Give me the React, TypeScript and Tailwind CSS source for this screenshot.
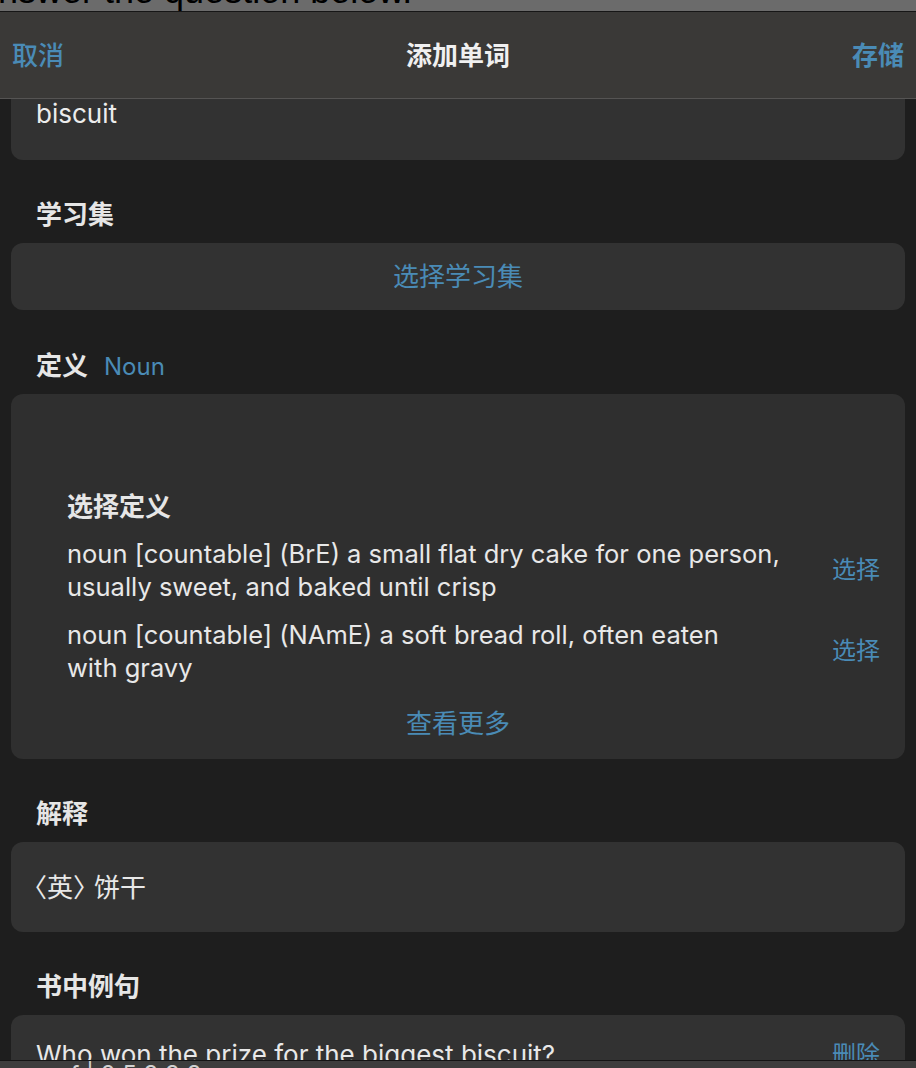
import React from "react";

const FONT = "font-['Inter','Noto_Sans_CJK_SC',sans-serif]";

const definitions = [
  {
    lines: [
      "noun [countable] (BrE) a small flat dry cake for one person,",
      "usually sweet, and baked until crisp",
    ],
  },
  {
    lines: ["noun [countable] (NAmE) a soft bread roll, often eaten", "with gravy"],
  },
];

const SectionLabel = ({ children }: { children: React.ReactNode }) => (
  <div className="px-[36px] text-[26px] leading-[30px] font-bold text-[#e6e6e6]">
    {children}
  </div>
);

export default function App() {
  return (
    <div className={`${FONT} w-[916px] h-[1068px] overflow-hidden bg-[#1e1e1e] flex flex-col`}>
      {/* window behind, clipped */}
      <div className="h-[11px] shrink-0 overflow-hidden bg-[#6b6b6b] border-b border-[#161616] box-content">
        <div className="-mt-[27px] -ml-[26px] text-[36px] leading-[36px] text-black whitespace-nowrap font-['Liberation_Sans',sans-serif]">
          Answer the question below.
        </div>
      </div>

      {/* Header */}
      <header className="h-[87px] shrink-0 bg-[#3a3937] border-b border-[#555453] flex items-center justify-between px-[12px]">
        <button className="text-[26px] font-medium text-[#4a8bb6]">取消</button>
        <h1 className="text-[26px] font-bold text-[#f0f0f0]">添加单词</h1>
        <button className="text-[26px] font-bold text-[#4a8bb6]">存储</button>
      </header>

      {/* Word card (scrolled under the header) */}
      <div className="px-[11px] shrink-0">
        <div className="h-[61px] rounded-b-[12px] bg-[#323232] px-[25px]">
          <div className="text-[26px] leading-[30px] text-[#ececec]">biscuit</div>
        </div>
      </div>

      {/* 学习集 */}
      <div className="mt-[40px]">
        <SectionLabel>学习集</SectionLabel>
      </div>
      <div className="px-[11px] mt-[13px] shrink-0">
        <div className="h-[67px] rounded-[12px] bg-[#323232] flex items-center justify-center">
          <span className="text-[26px] text-[#4a8bb6]">选择学习集</span>
        </div>
      </div>

      {/* 定义 */}
      <div className="mt-[41px]">
        <SectionLabel>
          定义
          <span className="ml-[16px] font-normal text-[24px] text-[#4a8bb6]">Noun</span>
        </SectionLabel>
      </div>
      <div className="px-[11px] mt-[12px] shrink-0">
        <div className="h-[365px] rounded-[12px] bg-[#2f2f2f] pt-[98px] pl-[56px] pr-[25px] flex flex-col">
          <div className="text-[26px] leading-[30px] font-bold text-[#e6e6e6]">选择定义</div>
          <div className="mt-[15px] flex flex-col gap-[15px]">
            {definitions.map((d, i) => (
              <div key={i} className="flex items-center justify-between">
                <div className="text-[25.5px] leading-[33px] text-[#e8e8e8] whitespace-nowrap">
                  {d.lines.map((l) => (
                    <div key={l}>{l}</div>
                  ))}
                </div>
                <button className="text-[24px] text-[#4a8bb6]">选择</button>
              </div>
            ))}
          </div>
          <div className="mt-[25px] -ml-[31px] text-center text-[26px] leading-[30px] text-[#4a8bb6]">
            查看更多
          </div>
        </div>
      </div>

      {/* 解释 */}
      <div className="mt-[40px]">
        <SectionLabel>解释</SectionLabel>
      </div>
      <div className="px-[11px] mt-[13px] shrink-0">
        <div className="h-[90px] rounded-[12px] bg-[#323232] flex items-center pl-[19px]">
          <span className="text-[26px] text-[#e8e8e8] flex items-center">
            <span className="-ml-[9px]">〈</span>
            <span>英</span>
            <span className="-mr-[5px]">〉</span>
            <span>饼干</span>
          </span>
        </div>
      </div>

      {/* 书中例句 */}
      <div className="mt-[40px]">
        <SectionLabel>书中例句</SectionLabel>
      </div>
      <div className="px-[11px] mt-[13px] flex-1 min-h-0">
        <div className="h-full rounded-t-[12px] bg-[#323232] px-[25px] pt-[23px] flex items-start justify-between">
          <span className="text-[26px] leading-[33px] text-[#e8e8e8]">
            Who won the prize for the biggest biscuit?
          </span>
          <button className="text-[24px] leading-[33px] text-[#4a8bb6]">删除</button>
        </div>
      </div>

      {/* window behind, clipped */}
      <div className="h-[8px] shrink-0 overflow-hidden bg-[#3d3d3d] border-t border-[#141414]">
        <div className="ml-[56px] mt-[2px] text-[24px] leading-[24px] text-[#d0d0d0] whitespace-nowrap">
          of | 2 5 3 3 3
        </div>
      </div>
    </div>
  );
}
